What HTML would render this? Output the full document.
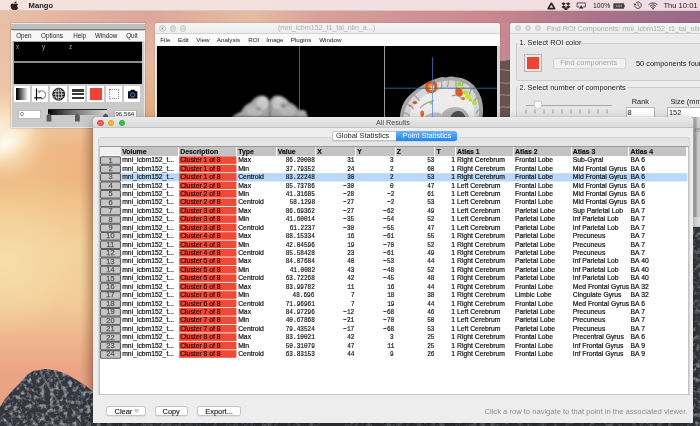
<!DOCTYPE html>
<html><head><meta charset="utf-8">
<style>
*{margin:0;padding:0;box-sizing:border-box}
html,body{width:700px;height:426px;overflow:hidden;background:#e2a982}
body{position:relative;font-family:"Liberation Sans",sans-serif;color:#1a1a1a}
.a{position:absolute}
.t{position:absolute;white-space:pre;line-height:1}
#menubar{left:0;top:0;width:700px;height:11px;background:linear-gradient(90deg,#f4e2dc,#f1dfdf 60%,#efdde4);border-bottom:1px solid #dcc6c6}
.mb{position:absolute;top:1.6px;font-size:7.6px;line-height:8px;color:#222;white-space:pre}
/* mango */
#mango{left:11px;top:23px;width:134px;height:104px;background:#cbcbcb;border:1px solid #a9a9a9}
/* viewer */
#viewer{left:155px;top:23px;width:345px;height:100px;background:#f4f4f4;border-radius:3px 3px 0 0;box-shadow:0 0 2px rgba(0,0,0,.25)}
.tl{position:absolute;width:6.4px;height:6.4px;border-radius:50%;background:#dcdcdc;border:0.5px solid #cdcdcd}
.vm{position:absolute;top:35.9px;font-size:6.25px;line-height:7px;color:#222;white-space:pre}
/* roi */
#roi{left:510px;top:23px;width:200px;height:195px;background:#ececec;border-radius:3px 3px 0 0;box-shadow:0 0 2px rgba(0,0,0,.25)}
/* results */
#res{left:93px;top:117px;width:600.5px;height:306px;background:#ececec;border-radius:4px 4px 0 0;box-shadow:0 3px 10px rgba(0,0,0,.45),0 0 1px rgba(0,0,0,.5)}
.hd{top:147.3px;height:8.4px;background:#c3c3c3}
.hd span{position:absolute;left:1.2px;top:0.6px;font-size:6.9px;line-height:7px;font-weight:bold;color:#111;white-space:pre;-webkit-text-stroke:0.15px #111}
.rh{left:100.1px;width:20.7px;height:8px}
.rh span{position:absolute;left:0;right:0;top:0.3px;text-align:center;font-size:7.4px;line-height:8px;color:#555;-webkit-text-stroke:0.25px #5a5a5a}
.red{left:179.2px;width:57.2px;height:7.8px;background:#ee4a35}
.selbg{left:121px;width:566.3px;height:8.2px;background:#b8d9fb}
.c{position:absolute;height:8px;font-size:6.8px;line-height:8px;margin-top:0px;white-space:pre;padding-left:1.2px;color:#111;overflow:hidden;-webkit-text-stroke:0.2px #111}
.c.d{color:#3c0600;-webkit-text-stroke:0.2px #3c0600}
.c.m{font-family:"Liberation Mono",monospace;font-size:7.9px;text-align:right;padding-right:1.3px;padding-left:0}
.c.m span{display:inline-block;transform:scaleX(0.77);transform-origin:100% 50%}
.c.r{text-align:right;padding-right:0.8px;padding-left:0}
.btn{position:absolute;height:10.5px;top:405.8px;-webkit-text-stroke:0.15px #222;background:#fff;border:0.6px solid #c4c4c4;border-radius:2.5px;box-shadow:0 0.5px 0.5px rgba(0,0,0,.12);font-size:7.4px;line-height:9.4px;text-align:center;color:#222}

</style></head><body>
<div class="a" style="left:0;top:0;width:700px;height:426px;overflow:hidden;will-change:transform">
<!-- desktop -->
<svg class="a" style="left:0;top:0" width="700" height="426">
<defs>
<linearGradient id="top" x1="0" x2="700" y1="0" y2="0" gradientUnits="userSpaceOnUse">
<stop offset="0" stop-color="#eac0a8"/><stop offset="0.15" stop-color="#e0ad9c"/><stop offset="0.21" stop-color="#dca69a"/>
<stop offset="0.36" stop-color="#e5bca2"/><stop offset="0.46" stop-color="#d89f9b"/><stop offset="0.7" stop-color="#c98791"/>
<stop offset="0.86" stop-color="#a9728a"/><stop offset="1" stop-color="#996888"/>
</linearGradient>
<linearGradient id="left" x1="0" x2="0" y1="0" y2="426" gradientUnits="userSpaceOnUse">
<stop offset="0" stop-color="#e8bba3"/><stop offset="0.2" stop-color="#ebc5a9"/><stop offset="0.3" stop-color="#eec39e"/>
<stop offset="0.35" stop-color="#efba88"/><stop offset="0.42" stop-color="#efbd88"/><stop offset="0.47" stop-color="#f2c68e"/>
<stop offset="0.59" stop-color="#f4d29c"/><stop offset="0.7" stop-color="#f2cd98"/><stop offset="0.8" stop-color="#eeb58e"/><stop offset="0.87" stop-color="#eaa586"/><stop offset="1" stop-color="#e9a283"/>
</linearGradient>
<radialGradient id="glow" cx="2" cy="135" r="48" gradientUnits="userSpaceOnUse">
<stop offset="0" stop-color="#fff8e8" stop-opacity="1"/><stop offset="0.5" stop-color="#fbe8c4" stop-opacity="0.7"/><stop offset="1" stop-color="#f8dcb0" stop-opacity="0"/>
</radialGradient>
<radialGradient id="cream" cx="5" cy="265" r="70" gradientUnits="userSpaceOnUse">
<stop offset="0" stop-color="#f7deaa" stop-opacity="0.9"/><stop offset="1" stop-color="#f7deaa" stop-opacity="0"/>
</radialGradient>
<radialGradient id="org" cx="80" cy="175" r="50" gradientUnits="userSpaceOnUse">
<stop offset="0" stop-color="#e8a46e" stop-opacity="0.3"/><stop offset="1" stop-color="#e8a46e" stop-opacity="0"/>
</radialGradient>
<linearGradient id="shadowR" x1="80" x2="93" y1="0" y2="0" gradientUnits="userSpaceOnUse">
<stop offset="0" stop-color="#a0502a" stop-opacity="0"/><stop offset="1" stop-color="#a0502a" stop-opacity="0.25"/>
</linearGradient>
<linearGradient id="rock" x1="0" x2="0" y1="360" y2="426" gradientUnits="userSpaceOnUse">
<stop offset="0" stop-color="#3c3d46"/><stop offset="1" stop-color="#494a52"/>
</linearGradient>
<linearGradient id="rockR" x1="0" x2="0" y1="55" y2="120" gradientUnits="userSpaceOnUse">
<stop offset="0" stop-color="#9a7f78"/><stop offset="1" stop-color="#7d6a68"/>
</linearGradient>
<filter id="blr"><feGaussianBlur stdDeviation="0.5"/></filter>
</defs>
<rect x="0" y="0" width="700" height="426" fill="url(#left)"/>
<rect x="0" y="140" width="120" height="220" fill="url(#cream)"/>
<rect x="0" y="110" width="120" height="120" fill="url(#org)"/>
<rect x="0" y="85" width="70" height="110" fill="url(#glow)"/>
<radialGradient id="glow2" cx="0.5" cy="0.5" r="0.5"><stop offset="0" stop-color="#fffdf6" stop-opacity="1"/><stop offset="0.4" stop-color="#fdf0da" stop-opacity="0.85"/><stop offset="1" stop-color="#f6d8b0" stop-opacity="0"/></radialGradient>
<ellipse cx="6" cy="143" rx="36" ry="20" transform="rotate(-32 6 143)" fill="url(#glow2)"/>
<ellipse cx="34" cy="122" rx="22" ry="7" transform="rotate(-25 34 122)" fill="url(#glow2)" opacity="0.6"/>
<rect x="80" y="117" width="13" height="309" fill="url(#shadowR)"/>
<rect x="0" y="0" width="700" height="24" fill="url(#top)"/>
<linearGradient id="gap1" x1="0" x2="0" y1="20" y2="120" gradientUnits="userSpaceOnUse"><stop offset="0" stop-color="#e0ad9e"/><stop offset="0.45" stop-color="#e6b89c"/><stop offset="1" stop-color="#e3aa7a"/></linearGradient><rect x="145" y="23" width="10" height="100" fill="url(#gap1)"/>
<rect x="490" y="23" width="25" height="100" fill="#c88890"/>
<path d="M495,61.5 L505,60.8 L512,59.5 L520,59 L520,125 L495,125 Z" fill="#66524f"/>
<g stroke="#a88d84" stroke-width="1.2" fill="none" opacity="0.8"><path d="M499,70 C503,68 507,72 511,70"/><path d="M498,84 C502,80 505,86 511,82"/><path d="M499,96 C503,92 507,98 511,94"/><path d="M500,108 C504,104 507,110 511,106"/></g>
<filter id="tex" x="0" y="0" width="100%" height="100%"><feTurbulence type="fractalNoise" baseFrequency="0.22" numOctaves="3" seed="4"/><feColorMatrix type="matrix" values="0 0 0 0 0.55  0 0 0 0 0.56  0 0 0 0 0.6  3.2 0 0 0 -1.45"/><feGaussianBlur stdDeviation="0.35"/></filter>
<clipPath id="rockclip"><path d="M0,407 L5,399 L12,391 L20,383 L27,375 L33,371 L45,369 L57,370.5 L66,374 L76,379.5 L86,386 L95,393 L95,426 L0,426 Z"/><rect x="80" y="419" width="620" height="7"/><rect x="686" y="215" width="14" height="211"/></clipPath>
<g clip-path="url(#rockclip)">
<rect x="0" y="360" width="700" height="66" fill="#34363f"/>
<rect x="680" y="210" width="20" height="216" fill="#34363f"/>
<rect x="0" y="360" width="100" height="66" fill="#9a9ca4" filter="url(#tex)" opacity="0.7"/><rect x="100" y="360" width="600" height="66" fill="#9a9ca4" filter="url(#tex)" opacity="0.35"/>
<rect x="680" y="210" width="20" height="216" fill="#9a9ca4" filter="url(#tex)" opacity="0.45"/>
<path d="M40,372 L46,382 L52,392 L58,402 L62,412" stroke="#8e9096" stroke-width="2" fill="none" opacity="0.5"/>
<path d="M56,374 L62,386 L66,398" stroke="#8e9096" stroke-width="1.5" fill="none" opacity="0.5"/>
</g>
</svg>
<!-- menubar -->
<div id="menubar" class="a">
<svg class="a" style="left:10.4px;top:0.7px" width="8.6" height="9.2" viewBox="1.6 0.6 11.6 13.6" preserveAspectRatio="none"><path d="M11.2 8.5c0-1.8 1.5-2.6 1.5-2.7-.8-1.2-2.1-1.4-2.5-1.4-1.1-.1-2.1.6-2.6.6-.6 0-1.4-.6-2.3-.6C4 4.4 2.3 5.5 2.3 8c0 2.6 1.9 5.9 3.3 5.9.7 0 1.1-.5 2.1-.5s1.3.5 2.2.5c1.3 0 2.7-2.9 2.9-3.4-1.4-.5-1.6-1.7-1.6-2zM9.6 3.3c.6-.7 1-1.6.9-2.5-.8 0-1.8.6-2.3 1.2-.5.6-1 1.5-.8 2.4.8.1 1.7-.4 2.2-1.1z" fill="#2a2426"/></svg>
<div class="mb" style="left:28.6px;font-weight:bold">Mango</div>
<svg class="a" style="left:547.2px;top:1.8px" width="8.8" height="7.8" viewBox="0 0 14 12.4"><path d="M7 2L12.2 10.6H1.8Z" fill="none" stroke="#2a2426" stroke-width="2.6" stroke-linejoin="round"/></svg>
<svg class="a" style="left:560.8px;top:1.6px" width="9.8" height="8.4" viewBox="0 0 16 14.6"><path d="M4 0.4L0 3.1 4 5.8 0 8.5l4 2.7 4-2.7-4-2.7 4-2.7zM12 0.4L8 3.1l4 2.7-4 2.7 4 2.7 4-2.7-4-2.7 4-2.7zM4 12L8 14.6 12 12 8 9.3z" fill="#2a2426"/></svg>
<svg class="a" style="left:576.3px;top:2.2px" width="10.4" height="7" viewBox="0 0 20 14"><path d="M6 10H1.8V1.8h16.4V10H14" fill="none" stroke="#2a2426" stroke-width="1.5"/><path d="M10 6.5l4.6 6.5H5.4z" fill="#2a2426"/></svg>
<div class="mb" style="left:593px;font-size:6.8px;top:2.1px">100%</div>
<svg class="a" style="left:612.8px;top:2.6px" width="12.6" height="6" viewBox="0 0 25 12"><rect x="0.5" y="0.5" width="21.5" height="11" rx="1" fill="#4a4446"/><rect x="22.5" y="3.5" width="2.2" height="5" fill="#4a4446"/><path d="M6 6h3M7.5 4.5v3M14 6h3M17 4.5v3" stroke="#cfc4c6" stroke-width="1.1"/><path d="M10 8.5 L12 3.5 L13.5 8.5" fill="none" stroke="#cfc4c6" stroke-width="1"/></svg>
<svg class="a" style="left:632.5px;top:1.3px" width="9" height="8.5" viewBox="0 0 18 17"><path d="M3.5 8.5A6.5 6.5 0 1 0 6 3.3" fill="none" stroke="#2a2426" stroke-width="1.6"/><path d="M1 5.5l3 3.6 3-3.4z" fill="#2a2426"/><path d="M10 4.5v4.5l3 2" fill="none" stroke="#2a2426" stroke-width="1.5"/></svg>
<svg class="a" style="left:647.8px;top:1.6px" width="10" height="8" viewBox="0 0 20 16"><path d="M1 5.5a13 13 0 0 1 18 0M3.8 8.3a9 9 0 0 1 12.4 0M6.6 11.1a5 5 0 0 1 6.8 0" fill="none" stroke="#2a2426" stroke-width="1.7"/><path d="M10 15.5l-2-2.3a2.8 2.8 0 0 1 4 0z" fill="#2a2426"/></svg>
<div class="mb" style="left:663.4px">Thu 10:01</div>
</div>

<!-- mango window -->
<div class="a" style="left:10.6px;top:22.9px;width:134.6px;height:105.5px;background:#cacaca;border:0.6px solid #e6e6e6;box-shadow:0 0 1.5px rgba(0,0,0,.35)"></div>
<div class="a" style="left:11.2px;top:23.5px;width:133.4px;height:6.9px;background:#bdbdbd;border-bottom:0.8px solid #777"></div>
<div class="a" style="left:11.2px;top:30.6px;width:133.4px;height:10.4px;background:#f6f6f6"></div>
<div class="t" style="left:16.2px;top:31.6px;font-size:6.3px;line-height:7.5px;color:#222">Open</div>
<div class="t" style="left:41.1px;top:31.6px;font-size:6.3px;line-height:7.5px;color:#222">Options</div>
<div class="t" style="left:73.2px;top:31.6px;font-size:6.3px;line-height:7.5px;color:#222">Help</div>
<div class="t" style="left:95px;top:31.6px;font-size:6.3px;line-height:7.5px;color:#222">Window</div>
<div class="t" style="left:126.2px;top:31.6px;font-size:6.3px;line-height:7.5px;color:#222">Quit</div>
<div class="a" style="left:13.3px;top:41.1px;width:128.9px;height:43px;background:#8c8c8c;border:0.6px solid #a8a8a8"></div>
<div class="a" style="left:13.9px;top:41.7px;width:127.7px;height:19.5px;background:#000"></div>
<div class="a" style="left:13.9px;top:63px;width:127.7px;height:20.7px;background:#000"></div>
<div class="t" style="left:16px;top:44.2px;font-size:6.4px;color:#a4a4a4">x</div>
<div class="t" style="left:42.1px;top:44.2px;font-size:6.4px;color:#a4a4a4">y</div>
<div class="t" style="left:68.9px;top:44.2px;font-size:6.4px;color:#a4a4a4">z</div>
<div class="a" style="left:13.9px;top:85.6px;width:16px;height:16.4px;background:#fff"></div>
<div class="a" style="left:16px;top:87.8px;width:11.6px;height:12.1px;background:linear-gradient(90deg,#000,#1a1a1a 15%,#fff)"></div>
<div class="a" style="left:31.8px;top:85.6px;width:16.5px;height:16.4px;background:#fff"></div>
<svg class="a" style="left:31.8px;top:85.6px" width="16.5" height="16.4" viewBox="0 0 16.5 16.4"><path d="M7.4 5.6A3.9 3.9 0 1 1 9.2 12.6" stroke="#8e8e8e" stroke-width="1.1" fill="none"/><path d="M5.6 4.2l1.4 3.4 2.2-2.6z" fill="#8e8e8e"/><path d="M4.5 2.4V14.4M2.2 11.9H9.8" stroke="#111" stroke-width="1.2" fill="none"/></svg>
<div class="a" style="left:50.2px;top:85.6px;width:17px;height:16.4px;background:#fff"></div>
<svg class="a" style="left:50.2px;top:85.6px" width="17" height="16.4" viewBox="0 0 17 16.4"><circle cx="8.7" cy="8.2" r="6" fill="#1e1e1e"/><g stroke="#f4f4f4" stroke-width="0.75" fill="none"><path d="M2.9 5.6Q8.7 4.4 14.5 5.6M2.7 8.2H14.7M2.9 10.8Q8.7 12 14.5 10.8"/><path d="M8.7 2.2V14.2"/><ellipse cx="8.7" cy="8.2" rx="3" ry="6"/></g><circle cx="8.7" cy="8.2" r="6" fill="none" stroke="#1e1e1e" stroke-width="0.9"/></svg>
<div class="a" style="left:68.6px;top:85.6px;width:16.6px;height:16.4px;background:#fff"></div>
<div class="a" style="left:72px;top:89.2px;width:11.5px;height:2.4px;background:#3a3a3a"></div>
<div class="a" style="left:72px;top:92.9px;width:11.5px;height:2.4px;background:#3a3a3a"></div>
<div class="a" style="left:72px;top:96.6px;width:11.5px;height:2.4px;background:#3a3a3a"></div>
<div class="a" style="left:87.2px;top:85.6px;width:16.6px;height:16.4px;background:#fff"></div>
<div class="a" style="left:89.8px;top:88px;width:12.2px;height:12.2px;background:#ee4430"></div>
<div class="a" style="left:105.5px;top:85.6px;width:16.5px;height:16.4px;background:#fff"></div>
<div class="a" style="left:109.4px;top:89.4px;width:9.6px;height:9.4px;border:0.8px dotted #8a8a8a"></div>
<div class="a" style="left:123.8px;top:85.6px;width:16.7px;height:16.4px;background:#fff"></div>
<svg class="a" style="left:123.8px;top:85.6px" width="16.7" height="16.4" viewBox="0 0 16.7 16.4"><path d="M4 5.2h2l1-1.4h3.6l1 1.4h1.8v7.4H4z" fill="#111"/><circle cx="8.7" cy="8.9" r="2.1" fill="none" stroke="#3a8ee6" stroke-width="0.9"/></svg>
<div class="a" style="left:18px;top:109.6px;width:23px;height:9.8px;background:#fff;border:0.5px solid #bdbdbd"></div>
<div class="t" style="left:20.3px;top:111.4px;font-size:6.2px;color:#333">0</div>
<div class="a" style="left:48.4px;top:109px;width:58.6px;height:6px;background:linear-gradient(90deg,#000,#555 30%,#ddd);border-top:0.6px solid #222"></div>
<svg class="a" style="left:46px;top:112.5px" width="64" height="9" viewBox="0 0 64 9"><path d="M0.6 2.5L3 0.3 5.4 2.5V8.6H0.6z" fill="#5b5b5b"/><path d="M29 2.5L31.4 0.3 33.8 2.5V8.6H29z" fill="#5b5b5b"/><path d="M57.2 2.5L59.6 0.3 62 2.5V8.6H57.2z" fill="#5b5b5b"/></svg>
<div class="a" style="left:114px;top:109.6px;width:23px;height:9.8px;background:#fff;border:0.5px solid #bdbdbd"></div>
<div class="t" style="left:115.4px;top:111.4px;font-size:6.2px;color:#333">96.564</div>

<!-- viewer window -->
<div class="a" style="left:155px;top:23px;width:345px;height:100px;background:#f6f6f6;border-radius:3px 3px 0 0;box-shadow:0 0 1.5px rgba(0,0,0,.3)"></div>
<div class="a" style="left:155px;top:23px;width:345px;height:10.5px;background:linear-gradient(#f6f6f6,#ececec);border-radius:3px 3px 0 0;border-bottom:0.6px solid #d2d2d2"></div>
<div class="tl" style="left:159.2px;top:25.2px"></div>
<div class="a" style="left:161.7px;top:27.7px;width:1.5px;height:1.5px;border-radius:50%;background:#666"></div>
<div class="tl" style="left:169.7px;top:25.2px"></div>
<div class="tl" style="left:180.1px;top:25.2px"></div>
<div class="t" style="left:278px;top:24.6px;font-size:7.1px;color:#ababab">(mni_icbm152_t1_tal_nlin_a...)</div>
<div class="a" style="left:155px;top:33.6px;width:345px;height:12.6px;background:#fbfbfb"></div>
<div class="vm" style="left:160.3px">File</div>
<div class="vm" style="left:178px">Edit</div>
<div class="vm" style="left:196.2px">View</div>
<div class="vm" style="left:216.8px">Analysis</div>
<div class="vm" style="left:248.2px">ROI</div>
<div class="vm" style="left:266.2px">Image</div>
<div class="vm" style="left:290.8px">Plugins</div>
<div class="vm" style="left:319.2px">Window</div>
<div class="a" style="left:155.8px;top:46.2px;width:343.2px;height:80px;background:#e0e0e0"></div>
<div class="a" style="left:156.6px;top:46.4px;width:340.8px;height:80px;background:#000"></div>
<div class="a" style="left:383.7px;top:46.4px;width:1px;height:80px;background:#9a9a9a"></div>
<div class="a" style="left:298.8px;top:46.4px;width:0.8px;height:80px;background:#2f63a0"></div>
<svg class="a" style="left:156.6px;top:46.4px" width="341" height="72" viewBox="156.6 46.4 341 72">
<defs>
<filter id="bl1" x="-20%" y="-20%" width="140%" height="140%"><feGaussianBlur stdDeviation="0.7"/></filter>
<filter id="bl2" x="-20%" y="-20%" width="140%" height="140%"><feGaussianBlur stdDeviation="1.1"/></filter>
<filter id="bl05" x="-20%" y="-20%" width="140%" height="140%"><feGaussianBlur stdDeviation="0.45"/></filter>
</defs>
<g filter="url(#bl2)">
<path d="M231,118 C234,115 238,113.5 241,112 C243,107 247,104 250.5,103 C253,99 257,96 262,96 C266,96 268.5,99 269.3,103 C270,99 273,96 277,96 C282,96 286,99 289,103 C293,104 297,108 299,111 C303,110.5 306,113 308,118 Z" fill="#a8a8a8"/>
<ellipse cx="262" cy="104" rx="6" ry="6" fill="#c8c8c8"/>
<ellipse cx="279" cy="104" rx="7" ry="6" fill="#c4c4c4"/>
<ellipse cx="254" cy="112" rx="8" ry="5" fill="#bcbcbc"/>
<ellipse cx="287" cy="112" rx="8" ry="5" fill="#b8b8b8"/>
<ellipse cx="262" cy="99.5" rx="3" ry="2" fill="#d4d4d4"/>
<ellipse cx="278" cy="99.5" rx="3" ry="2" fill="#d0d0d0"/>
<ellipse cx="283" cy="106" rx="3" ry="2.5" fill="#8e8e8e"/>
<ellipse cx="258" cy="109" rx="3" ry="2" fill="#9a9a9a"/>
<ellipse cx="302" cy="114" rx="4" ry="3.5" fill="#b0b0b0"/>
<path d="M269.4,103 L269.4,118" stroke="#4a4a4a" stroke-width="1.1"/>
</g>
<g filter="url(#bl05)">
<path d="M399.5,118 C400,108 404,100 410,95 C415,90 421,86 427,83 C431,81 435,79 438,78.5 C441,77 444,77.5 446,78 C449,76.5 453,76.8 456,78 C459,77.5 462,78.5 465,80 C472,83 478,90 481,99 C483,106 483,112 482,118 Z" fill="#a6a6a6"/>
<path d="M403,118 C404,109 408,101 414,96 C419,91 425,88 430,85.5 C436,83 441,81.5 447,81 C454,80.5 461,82 466,84.5 C472,88.5 476,96 478,104 C479,110 479,114 478,118 Z" fill="#d6d6d6"/>
<path d="M409,118 C410,110 414,104 420,99 C426,94 434,90.5 442,89 C451,88 459,89.5 465,93 C471,98 474,106 474,118 Z" fill="#ececec"/>
<g stroke="#a4a4a4" stroke-width="1.3" fill="none" stroke-linecap="round">
<path d="M441,79 C441.5,82 442,85 441,88"/><path d="M447.5,78 C448,81 448.5,84 447,87"/><path d="M456,78.5 C455.5,82 455,85 456,88"/><path d="M464,81 C462,84 461,87 461.5,90"/>
<path d="M423,86.5 C425,89 427,91 428,94"/><path d="M413,95 C416,97 418,99 419,101"/><path d="M405,104 C409,105 412,107 413,109"/><path d="M401.5,113 C405,113 408,114 409,116"/>
<path d="M473,86 C470,90 469,93 469,96"/><path d="M479,96 C476,98 474,100 473,103"/><path d="M481.5,108 C479,109 477,111 476,113"/>
<path d="M420,108 C424,104 429,102 433,101"/><path d="M452,96 C456,95 460,97 462,100"/>
</g>
<path d="M440,118 C442,111 448,107.5 455,107.5 C462,107.5 467,111 469,118 Z" fill="#b4b4b4"/>
<path d="M450,118 C451,114 454,111.5 458,111.5 C461,111.5 464,114 465,118 Z" fill="#505050"/>
<path d="M424,118 C426,114.5 431,113 436,113 C440,113 442,115 443,118 Z" fill="#c0c0c0"/>
</g>
<g filter="url(#bl05)">
<path d="M425.5,84.5 C426.5,82 429,81.5 430.5,82 C431.5,80.8 434,80.8 435,82.5 C436.5,83.5 437,85.5 436.8,88 C437,90 436,92.3 434,92.7 C432.8,94 429.5,94 428.3,92.7 C426.3,92.3 424.8,90.8 425.2,88.7 C424.5,87.5 424.8,85.5 425.5,84.5 Z" fill="#e4501a"/>
<path d="M428,86 C428.8,84 431.5,83.6 433.2,84.8 C434.8,86 434.8,88.8 433.6,90.4 C432,91.6 429.2,91.2 428.4,89.6 C427.6,88.4 427.6,87.2 428,86 Z" fill="#f39a1c"/>
<circle cx="432" cy="88.2" r="1.9" fill="#fffbe8"/>
<circle cx="437" cy="90" r="1.2" fill="#b8e01c"/>
<circle cx="459" cy="84.5" r="2.2" fill="#9ad81c"/>
<circle cx="462" cy="88" r="2" fill="#c8e62a"/>
<path d="M455,90 C456,88 459,88 461,90 C463,92 463,95 461,96.5 C459,97.5 456,96 455,94 Z" fill="#e4561a"/>
<circle cx="465" cy="93" r="2.2" fill="#b6e01c"/>
<circle cx="467.5" cy="97" r="2.8" fill="#c6e82a"/>
<circle cx="463" cy="99" r="1.6" fill="#e8701c"/>
<circle cx="470" cy="100.5" r="1.5" fill="#a4d81c"/>
<circle cx="474.2" cy="103.4" r="2.3" fill="#b4e01c"/>
<ellipse cx="414.5" cy="103" rx="2.2" ry="1.6" fill="#e2581c"/>
<ellipse cx="421.8" cy="114.2" rx="1.8" ry="3.2" fill="#e8641c"/>
<ellipse cx="430.5" cy="103.3" rx="1.1" ry="1.6" fill="#9cd41c"/>
<ellipse cx="409.5" cy="106.3" rx="1" ry="0.8" fill="#e25a1c"/>
</g>
<path d="M384.5,88.6H497" stroke="#2e64a4" stroke-width="0.9"/>
<path d="M432.1,57.5V80" stroke="#2e64a4" stroke-width="0.9"/>
<path d="M432.1,80V118" stroke="#5d9ad6" stroke-width="0.9" opacity="0.9"/>
</svg>
<div class="a" style="left:497.4px;top:46.4px;width:2.6px;height:80px;background:#d6d6d6"></div>

<!-- roi window -->
<div class="a" style="left:510.3px;top:23px;width:200px;height:195px;background:#ececec;border-radius:3px 3px 0 0;box-shadow:0 0 1.5px rgba(0,0,0,.3)"></div>
<div class="a" style="left:510.3px;top:23px;width:200px;height:10.5px;background:linear-gradient(#f6f6f6,#ececec);border-radius:3px 3px 0 0;border-bottom:0.6px solid #d2d2d2"></div>
<div class="tl" style="left:514.5px;top:25.1px"></div>
<div class="tl" style="left:524.5px;top:25.1px"></div>
<div class="tl" style="left:534.5px;top:25.1px"></div>
<div class="t" style="left:546.8px;top:24.5px;font-size:7.2px;color:#ababab">Find ROI Components: mni_icbm152_t1_tal_nlin_a</div>
<div class="a" style="left:515.6px;top:42.6px;width:200px;height:38.6px;border:0.6px solid #cdcdcd;border-radius:2px;background:#e6e6e6"></div>
<div class="a" style="left:518px;top:39px;width:63px;height:8px;background:#ececec"></div>
<div class="t" style="left:519.4px;top:39.4px;font-size:7.4px;color:#222">1. Select ROI color</div>
<div class="a" style="left:524px;top:54.3px;width:18px;height:17.3px;background:#e8e8e8;border:0.6px solid #b5b5b5"></div>
<div class="a" style="left:527px;top:57.2px;width:12px;height:11.8px;background:#ee4430"></div>
<div class="a" style="left:552.6px;top:57.5px;width:73.2px;height:11px;background:#f1f1f1;border:0.6px solid #d6d6d6;border-radius:2.5px"></div>
<div class="t" style="left:560.2px;top:59.2px;font-size:7.4px;color:#a4a4a4">Find components</div>
<div class="t" style="left:636px;top:59.6px;font-size:7.4px;color:#222">50 components found</div>
<div class="a" style="left:515.6px;top:87px;width:200px;height:140px;border:0.6px solid #cdcdcd;border-radius:2px;background:#e6e6e6"></div>
<div class="a" style="left:518px;top:83px;width:110px;height:8px;background:#ececec"></div>
<div class="t" style="left:519.4px;top:83.6px;font-size:7.4px;color:#222">2. Select number of components</div>
<div class="a" style="left:526px;top:105px;width:86px;height:1px;background:#a9a9a9"></div>
<svg class="a" style="left:524px;top:100px" width="90" height="15" viewBox="0 0 90 15">
<g stroke="#8c8c8c" stroke-width="0.8"><path d="M2 9.4V13.6M11 9.4V13.6M20 9.4V13.6M29 9.4V13.6M38 9.4V13.6M47 9.4V13.6M56 9.4V13.6M65 9.4V13.6M74 9.4V13.6M83 9.4V13.6"/></g>
<path d="M10.2 1.2H17.4V6.4L13.8 9.6 10.2 6.4Z" fill="#fafafa" stroke="#b0b0b0" stroke-width="0.6"/>
</svg>
<div class="t" style="left:631.7px;top:98px;font-size:7.4px;color:#222">Rank</div>
<div class="t" style="left:670.4px;top:98px;font-size:7.4px;color:#222">Size (mm)</div>
<div class="a" style="left:625.8px;top:107px;width:29.6px;height:12px;background:#fff;border:0.6px solid #b8b8b8"></div>
<div class="t" style="left:627.5px;top:109.4px;font-size:7.4px;color:#222">8</div>
<div class="a" style="left:667px;top:107px;width:40px;height:12px;background:#fff;border:0.6px solid #b8b8b8"></div>
<div class="t" style="left:669px;top:109.4px;font-size:7.4px;color:#222">152</div>

<div class="a" style="left:690px;top:117px;width:10px;height:100px;background:linear-gradient(90deg,#c9c9c9 0,#c9c9c9 35%,#a9a9a9 45%,#b0b0b0 62%,#d2d2d2 70%,#d6d6d6 100%)"></div>
<div class="t" style="left:694.5px;top:125.5px;font-size:7px;font-style:italic;color:#8c8c8c">re</div>
<!-- results window -->
<div class="a" style="left:93.3px;top:117.3px;width:600.2px;height:305.5px;background:#ededed;border-radius:4px 4px 0 0;box-shadow:0 4px 12px rgba(0,0,0,.35),0 0 1px rgba(0,0,0,.45)"></div>
<div class="a" style="left:93.3px;top:117.3px;width:600.2px;height:10.4px;background:linear-gradient(#ebebeb,#d8d8d8);border-radius:4px 4px 0 0;border-bottom:0.6px solid #c2c2c2"></div>
<div class="a" style="left:97.4px;top:119.5px;width:6.6px;height:6.6px;border-radius:50%;background:#fc5f57;border:0.5px solid #e2463f"></div>
<div class="a" style="left:107.9px;top:119.5px;width:6.6px;height:6.6px;border-radius:50%;background:#fdbc2e;border:0.5px solid #e1a116"></div>
<div class="a" style="left:118.5px;top:119.5px;width:6.6px;height:6.6px;border-radius:50%;background:#33c748;border:0.5px solid #27aa35"></div>
<div class="t" style="left:376px;top:119px;font-size:7.2px;color:#4a4a4a">All Results</div>
<div class="a" style="left:98px;top:137.2px;width:592px;height:258px;background:#e4e4e4;border:0.6px solid #d6d6d6;border-bottom:none;border-radius:2px 2px 0 0"></div>
<div class="a" style="left:331.8px;top:130.9px;width:124.7px;height:10.5px;background:#fff;border:0.6px solid #c4c4c4;border-radius:2.5px;box-shadow:0 0.5px 0.6px rgba(0,0,0,.15)"></div>
<div class="a" style="left:396px;top:130.9px;width:60.5px;height:10.5px;background:linear-gradient(#6cb3fa,#1e85f5);border-radius:0 2.5px 2.5px 0"></div>
<div class="t" style="left:336px;top:132.4px;font-size:7.45px;color:#222">Global Statistics</div>
<div class="t" style="left:402.5px;top:132.4px;font-size:7.45px;color:#fff">Point Statistics</div>
<div class="a" style="left:99.2px;top:146.1px;width:589.6px;height:248.9px;background:#fff;border:0.7px solid #c4c4c4;border-top-color:#9a9a9a"></div>
<div class="a" style="left:100px;top:147.1px;width:20.7px;height:8.4px;background:#f1f1f1"></div>
<div class="btn" style="left:106.4px;width:39.2px;text-align:left;padding-left:7.2px">Clear</div><svg class="a" style="left:134.4px;top:409.4px" width="5" height="4" viewBox="0 0 5 4"><path d="M0.6 0.8H4.4L2.5 3.4Z" fill="none" stroke="#8a8a8a" stroke-width="0.7"/></svg>
<div class="btn" style="left:154.6px;width:33.2px">Copy</div>
<div class="btn" style="left:196.8px;width:44.5px">Export...</div>
<div class="t" style="left:484.5px;top:408px;font-size:7.6px;color:#8e8e8e">Click a row to navigate to that point in the associated viewer.</div>
<svg class="a" style="left:0;top:0" width="700" height="426"><rect x="100.5" y="156.70" width="20" height="7.6" rx="1" fill="#c6c6c6" stroke="#5f5f5f" stroke-width="1.1"/><rect x="179.2" y="156.30" width="57.2" height="7.6" fill="#ee4a35"/><rect x="100.5" y="165.13" width="20" height="7.6" rx="1" fill="#c6c6c6" stroke="#5f5f5f" stroke-width="1.1"/><rect x="179.2" y="164.73" width="57.2" height="7.6" fill="#ee4a35"/><rect x="100.5" y="173.56" width="20" height="7.6" rx="1" fill="#c6c6c6" stroke="#5f5f5f" stroke-width="1.1"/><rect x="121" y="173.16" width="566.3" height="8.3" fill="#b8d9fb"/><rect x="179.2" y="173.16" width="57.2" height="7.6" fill="#ee4a35"/><rect x="100.5" y="181.99" width="20" height="7.6" rx="1" fill="#c6c6c6" stroke="#5f5f5f" stroke-width="1.1"/><rect x="179.2" y="181.59" width="57.2" height="7.6" fill="#ee4a35"/><rect x="100.5" y="190.42" width="20" height="7.6" rx="1" fill="#c6c6c6" stroke="#5f5f5f" stroke-width="1.1"/><rect x="179.2" y="190.02" width="57.2" height="7.6" fill="#ee4a35"/><rect x="100.5" y="198.85" width="20" height="7.6" rx="1" fill="#c6c6c6" stroke="#5f5f5f" stroke-width="1.1"/><rect x="179.2" y="198.45" width="57.2" height="7.6" fill="#ee4a35"/><rect x="100.5" y="207.28" width="20" height="7.6" rx="1" fill="#c6c6c6" stroke="#5f5f5f" stroke-width="1.1"/><rect x="179.2" y="206.88" width="57.2" height="7.6" fill="#ee4a35"/><rect x="100.5" y="215.71" width="20" height="7.6" rx="1" fill="#c6c6c6" stroke="#5f5f5f" stroke-width="1.1"/><rect x="179.2" y="215.31" width="57.2" height="7.6" fill="#ee4a35"/><rect x="100.5" y="224.14" width="20" height="7.6" rx="1" fill="#c6c6c6" stroke="#5f5f5f" stroke-width="1.1"/><rect x="179.2" y="223.74" width="57.2" height="7.6" fill="#ee4a35"/><rect x="100.5" y="232.57" width="20" height="7.6" rx="1" fill="#c6c6c6" stroke="#5f5f5f" stroke-width="1.1"/><rect x="179.2" y="232.17" width="57.2" height="7.6" fill="#ee4a35"/><rect x="100.5" y="241.00" width="20" height="7.6" rx="1" fill="#c6c6c6" stroke="#5f5f5f" stroke-width="1.1"/><rect x="179.2" y="240.60" width="57.2" height="7.6" fill="#ee4a35"/><rect x="100.5" y="249.43" width="20" height="7.6" rx="1" fill="#c6c6c6" stroke="#5f5f5f" stroke-width="1.1"/><rect x="179.2" y="249.03" width="57.2" height="7.6" fill="#ee4a35"/><rect x="100.5" y="257.86" width="20" height="7.6" rx="1" fill="#c6c6c6" stroke="#5f5f5f" stroke-width="1.1"/><rect x="179.2" y="257.46" width="57.2" height="7.6" fill="#ee4a35"/><rect x="100.5" y="266.29" width="20" height="7.6" rx="1" fill="#c6c6c6" stroke="#5f5f5f" stroke-width="1.1"/><rect x="179.2" y="265.89" width="57.2" height="7.6" fill="#ee4a35"/><rect x="100.5" y="274.72" width="20" height="7.6" rx="1" fill="#c6c6c6" stroke="#5f5f5f" stroke-width="1.1"/><rect x="179.2" y="274.32" width="57.2" height="7.6" fill="#ee4a35"/><rect x="100.5" y="283.15" width="20" height="7.6" rx="1" fill="#c6c6c6" stroke="#5f5f5f" stroke-width="1.1"/><rect x="179.2" y="282.75" width="57.2" height="7.6" fill="#ee4a35"/><rect x="100.5" y="291.58" width="20" height="7.6" rx="1" fill="#c6c6c6" stroke="#5f5f5f" stroke-width="1.1"/><rect x="179.2" y="291.18" width="57.2" height="7.6" fill="#ee4a35"/><rect x="100.5" y="300.01" width="20" height="7.6" rx="1" fill="#c6c6c6" stroke="#5f5f5f" stroke-width="1.1"/><rect x="179.2" y="299.61" width="57.2" height="7.6" fill="#ee4a35"/><rect x="100.5" y="308.44" width="20" height="7.6" rx="1" fill="#c6c6c6" stroke="#5f5f5f" stroke-width="1.1"/><rect x="179.2" y="308.04" width="57.2" height="7.6" fill="#ee4a35"/><rect x="100.5" y="316.87" width="20" height="7.6" rx="1" fill="#c6c6c6" stroke="#5f5f5f" stroke-width="1.1"/><rect x="179.2" y="316.47" width="57.2" height="7.6" fill="#ee4a35"/><rect x="100.5" y="325.30" width="20" height="7.6" rx="1" fill="#c6c6c6" stroke="#5f5f5f" stroke-width="1.1"/><rect x="179.2" y="324.90" width="57.2" height="7.6" fill="#ee4a35"/><rect x="100.5" y="333.73" width="20" height="7.6" rx="1" fill="#c6c6c6" stroke="#5f5f5f" stroke-width="1.1"/><rect x="179.2" y="333.33" width="57.2" height="7.6" fill="#ee4a35"/><rect x="100.5" y="342.16" width="20" height="7.6" rx="1" fill="#c6c6c6" stroke="#5f5f5f" stroke-width="1.1"/><rect x="179.2" y="341.76" width="57.2" height="7.6" fill="#ee4a35"/><rect x="100.5" y="350.59" width="20" height="7.6" rx="1" fill="#c6c6c6" stroke="#5f5f5f" stroke-width="1.1"/><rect x="179.2" y="350.19" width="57.2" height="7.6" fill="#ee4a35"/></svg><div class="a" style="left:0;top:0;width:700px;height:426px;will-change:transform"><div class="a hd" style="left:121px;width:57.00px"><span>Volume</span></div>
<div class="a hd" style="left:179px;width:57.00px"><span>Description</span></div>
<div class="a hd" style="left:237px;width:38.50px"><span>Type</span></div>
<div class="a hd" style="left:276.5px;width:38.50px"><span>Value</span></div>
<div class="a hd" style="left:316px;width:39.00px"><span>X</span></div>
<div class="a hd" style="left:356px;width:38.50px"><span>Y</span></div>
<div class="a hd" style="left:395.5px;width:38.80px"><span>Z</span></div>
<div class="a hd" style="left:435.3px;width:19.50px"><span>T</span></div>
<div class="a hd" style="left:455.8px;width:57.00px"><span>Atlas 1</span></div>
<div class="a hd" style="left:513.8px;width:56.80px"><span>Atlas 2</span></div>
<div class="a hd" style="left:571.6px;width:56.80px"><span>Atlas 3</span></div>
<div class="a hd" style="left:629.4px;width:56.90px"><span>Atlas 4</span></div>
<div class="a rh" style="top:156.30px"><span>1</span></div>
<div class="c" style="left:121px;top:156.30px;width:58.00px">mni_icbm152_t...</div>
<div class="c d" style="left:179px;top:156.30px;width:58.00px">Cluster 1 of 8</div>
<div class="c" style="left:237px;top:156.30px;width:39.50px">Max</div>
<div class="c m" style="left:276.5px;top:156.30px;width:39.50px"><span>86.20008</span></div>
<div class="c m" style="left:316px;top:156.30px;width:40.00px"><span>31</span></div>
<div class="c m" style="left:356px;top:156.30px;width:39.50px"><span>3</span></div>
<div class="c m" style="left:395.5px;top:156.30px;width:39.80px"><span>53</span></div>
<div class="c r" style="left:435.3px;top:156.30px;width:20.50px">1</div>
<div class="c" style="left:455.8px;top:156.30px;width:58.00px">Right Cerebrum</div>
<div class="c" style="left:513.8px;top:156.30px;width:57.80px">Frontal Lobe</div>
<div class="c" style="left:571.6px;top:156.30px;width:57.80px">Sub-Gyral</div>
<div class="c" style="left:629.4px;top:156.30px;width:57.90px">BA 6</div>
<div class="a rh" style="top:164.73px"><span>2</span></div>
<div class="c" style="left:121px;top:164.73px;width:58.00px">mni_icbm152_t...</div>
<div class="c d" style="left:179px;top:164.73px;width:58.00px">Cluster 1 of 8</div>
<div class="c" style="left:237px;top:164.73px;width:39.50px">Min</div>
<div class="c m" style="left:276.5px;top:164.73px;width:39.50px"><span>37.79352</span></div>
<div class="c m" style="left:316px;top:164.73px;width:40.00px"><span>24</span></div>
<div class="c m" style="left:356px;top:164.73px;width:39.50px"><span>2</span></div>
<div class="c m" style="left:395.5px;top:164.73px;width:39.80px"><span>60</span></div>
<div class="c r" style="left:435.3px;top:164.73px;width:20.50px">1</div>
<div class="c" style="left:455.8px;top:164.73px;width:58.00px">Right Cerebrum</div>
<div class="c" style="left:513.8px;top:164.73px;width:57.80px">Frontal Lobe</div>
<div class="c" style="left:571.6px;top:164.73px;width:57.80px">Mid Frontal Gyrus</div>
<div class="c" style="left:629.4px;top:164.73px;width:57.90px">BA 6</div>
<div class="a rh" style="top:173.16px"><span>3</span></div>
<div class="c" style="left:121px;top:173.16px;width:58.00px">mni_icbm152_t...</div>
<div class="c d" style="left:179px;top:173.16px;width:58.00px">Cluster 1 of 8</div>
<div class="c" style="left:237px;top:173.16px;width:39.50px">Centroid</div>
<div class="c m" style="left:276.5px;top:173.16px;width:39.50px"><span>83.22248</span></div>
<div class="c m" style="left:316px;top:173.16px;width:40.00px"><span>30</span></div>
<div class="c m" style="left:356px;top:173.16px;width:39.50px"><span>2</span></div>
<div class="c m" style="left:395.5px;top:173.16px;width:39.80px"><span>53</span></div>
<div class="c r" style="left:435.3px;top:173.16px;width:20.50px">1</div>
<div class="c" style="left:455.8px;top:173.16px;width:58.00px">Right Cerebrum</div>
<div class="c" style="left:513.8px;top:173.16px;width:57.80px">Frontal Lobe</div>
<div class="c" style="left:571.6px;top:173.16px;width:57.80px">Mid Frontal Gyrus</div>
<div class="c" style="left:629.4px;top:173.16px;width:57.90px">BA 6</div>
<div class="a rh" style="top:181.59px"><span>4</span></div>
<div class="c" style="left:121px;top:181.59px;width:58.00px">mni_icbm152_t...</div>
<div class="c d" style="left:179px;top:181.59px;width:58.00px">Cluster 2 of 8</div>
<div class="c" style="left:237px;top:181.59px;width:39.50px">Max</div>
<div class="c m" style="left:276.5px;top:181.59px;width:39.50px"><span>85.73786</span></div>
<div class="c m" style="left:316px;top:181.59px;width:40.00px"><span>−30</span></div>
<div class="c m" style="left:356px;top:181.59px;width:39.50px"><span>0</span></div>
<div class="c m" style="left:395.5px;top:181.59px;width:39.80px"><span>47</span></div>
<div class="c r" style="left:435.3px;top:181.59px;width:20.50px">1</div>
<div class="c" style="left:455.8px;top:181.59px;width:58.00px">Left Cerebrum</div>
<div class="c" style="left:513.8px;top:181.59px;width:57.80px">Frontal Lobe</div>
<div class="c" style="left:571.6px;top:181.59px;width:57.80px">Mid Frontal Gyrus</div>
<div class="c" style="left:629.4px;top:181.59px;width:57.90px">BA 6</div>
<div class="a rh" style="top:190.02px"><span>5</span></div>
<div class="c" style="left:121px;top:190.02px;width:58.00px">mni_icbm152_t...</div>
<div class="c d" style="left:179px;top:190.02px;width:58.00px">Cluster 2 of 8</div>
<div class="c" style="left:237px;top:190.02px;width:39.50px">Min</div>
<div class="c m" style="left:276.5px;top:190.02px;width:39.50px"><span>41.31685</span></div>
<div class="c m" style="left:316px;top:190.02px;width:40.00px"><span>−28</span></div>
<div class="c m" style="left:356px;top:190.02px;width:39.50px"><span>−2</span></div>
<div class="c m" style="left:395.5px;top:190.02px;width:39.80px"><span>61</span></div>
<div class="c r" style="left:435.3px;top:190.02px;width:20.50px">1</div>
<div class="c" style="left:455.8px;top:190.02px;width:58.00px">Left Cerebrum</div>
<div class="c" style="left:513.8px;top:190.02px;width:57.80px">Frontal Lobe</div>
<div class="c" style="left:571.6px;top:190.02px;width:57.80px">Mid Frontal Gyrus</div>
<div class="c" style="left:629.4px;top:190.02px;width:57.90px">BA 6</div>
<div class="a rh" style="top:198.45px"><span>6</span></div>
<div class="c" style="left:121px;top:198.45px;width:58.00px">mni_icbm152_t...</div>
<div class="c d" style="left:179px;top:198.45px;width:58.00px">Cluster 2 of 8</div>
<div class="c" style="left:237px;top:198.45px;width:39.50px">Centroid</div>
<div class="c m" style="left:276.5px;top:198.45px;width:39.50px"><span>58.1298</span></div>
<div class="c m" style="left:316px;top:198.45px;width:40.00px"><span>−27</span></div>
<div class="c m" style="left:356px;top:198.45px;width:39.50px"><span>−2</span></div>
<div class="c m" style="left:395.5px;top:198.45px;width:39.80px"><span>53</span></div>
<div class="c r" style="left:435.3px;top:198.45px;width:20.50px">1</div>
<div class="c" style="left:455.8px;top:198.45px;width:58.00px">Left Cerebrum</div>
<div class="c" style="left:513.8px;top:198.45px;width:57.80px">Frontal Lobe</div>
<div class="c" style="left:571.6px;top:198.45px;width:57.80px">Mid Frontal Gyrus</div>
<div class="c" style="left:629.4px;top:198.45px;width:57.90px">BA 6</div>
<div class="a rh" style="top:206.88px"><span>7</span></div>
<div class="c" style="left:121px;top:206.88px;width:58.00px">mni_icbm152_t...</div>
<div class="c d" style="left:179px;top:206.88px;width:58.00px">Cluster 3 of 8</div>
<div class="c" style="left:237px;top:206.88px;width:39.50px">Max</div>
<div class="c m" style="left:276.5px;top:206.88px;width:39.50px"><span>86.69362</span></div>
<div class="c m" style="left:316px;top:206.88px;width:40.00px"><span>−27</span></div>
<div class="c m" style="left:356px;top:206.88px;width:39.50px"><span>−62</span></div>
<div class="c m" style="left:395.5px;top:206.88px;width:39.80px"><span>49</span></div>
<div class="c r" style="left:435.3px;top:206.88px;width:20.50px">1</div>
<div class="c" style="left:455.8px;top:206.88px;width:58.00px">Left Cerebrum</div>
<div class="c" style="left:513.8px;top:206.88px;width:57.80px">Parietal Lobe</div>
<div class="c" style="left:571.6px;top:206.88px;width:57.80px">Sup Parietal Lob</div>
<div class="c" style="left:629.4px;top:206.88px;width:57.90px">BA 7</div>
<div class="a rh" style="top:215.31px"><span>8</span></div>
<div class="c" style="left:121px;top:215.31px;width:58.00px">mni_icbm152_t...</div>
<div class="c d" style="left:179px;top:215.31px;width:58.00px">Cluster 3 of 8</div>
<div class="c" style="left:237px;top:215.31px;width:39.50px">Min</div>
<div class="c m" style="left:276.5px;top:215.31px;width:39.50px"><span>41.60014</span></div>
<div class="c m" style="left:316px;top:215.31px;width:40.00px"><span>−35</span></div>
<div class="c m" style="left:356px;top:215.31px;width:39.50px"><span>−54</span></div>
<div class="c m" style="left:395.5px;top:215.31px;width:39.80px"><span>52</span></div>
<div class="c r" style="left:435.3px;top:215.31px;width:20.50px">1</div>
<div class="c" style="left:455.8px;top:215.31px;width:58.00px">Left Cerebrum</div>
<div class="c" style="left:513.8px;top:215.31px;width:57.80px">Parietal Lobe</div>
<div class="c" style="left:571.6px;top:215.31px;width:57.80px">Inf Parietal Lob</div>
<div class="c" style="left:629.4px;top:215.31px;width:57.90px">BA 7</div>
<div class="a rh" style="top:223.74px"><span>9</span></div>
<div class="c" style="left:121px;top:223.74px;width:58.00px">mni_icbm152_t...</div>
<div class="c d" style="left:179px;top:223.74px;width:58.00px">Cluster 3 of 8</div>
<div class="c" style="left:237px;top:223.74px;width:39.50px">Centroid</div>
<div class="c m" style="left:276.5px;top:223.74px;width:39.50px"><span>61.2237</span></div>
<div class="c m" style="left:316px;top:223.74px;width:40.00px"><span>−30</span></div>
<div class="c m" style="left:356px;top:223.74px;width:39.50px"><span>−55</span></div>
<div class="c m" style="left:395.5px;top:223.74px;width:39.80px"><span>47</span></div>
<div class="c r" style="left:435.3px;top:223.74px;width:20.50px">1</div>
<div class="c" style="left:455.8px;top:223.74px;width:58.00px">Left Cerebrum</div>
<div class="c" style="left:513.8px;top:223.74px;width:57.80px">Parietal Lobe</div>
<div class="c" style="left:571.6px;top:223.74px;width:57.80px">Inf Parietal Lob</div>
<div class="c" style="left:629.4px;top:223.74px;width:57.90px">BA 7</div>
<div class="a rh" style="top:232.17px"><span>10</span></div>
<div class="c" style="left:121px;top:232.17px;width:58.00px">mni_icbm152_t...</div>
<div class="c d" style="left:179px;top:232.17px;width:58.00px">Cluster 4 of 8</div>
<div class="c" style="left:237px;top:232.17px;width:39.50px">Max</div>
<div class="c m" style="left:276.5px;top:232.17px;width:39.50px"><span>88.15334</span></div>
<div class="c m" style="left:316px;top:232.17px;width:40.00px"><span>16</span></div>
<div class="c m" style="left:356px;top:232.17px;width:39.50px"><span>−61</span></div>
<div class="c m" style="left:395.5px;top:232.17px;width:39.80px"><span>55</span></div>
<div class="c r" style="left:435.3px;top:232.17px;width:20.50px">1</div>
<div class="c" style="left:455.8px;top:232.17px;width:58.00px">Right Cerebrum</div>
<div class="c" style="left:513.8px;top:232.17px;width:57.80px">Parietal Lobe</div>
<div class="c" style="left:571.6px;top:232.17px;width:57.80px">Precuneus</div>
<div class="c" style="left:629.4px;top:232.17px;width:57.90px">BA 7</div>
<div class="a rh" style="top:240.60px"><span>11</span></div>
<div class="c" style="left:121px;top:240.60px;width:58.00px">mni_icbm152_t...</div>
<div class="c d" style="left:179px;top:240.60px;width:58.00px">Cluster 4 of 8</div>
<div class="c" style="left:237px;top:240.60px;width:39.50px">Min</div>
<div class="c m" style="left:276.5px;top:240.60px;width:39.50px"><span>42.04596</span></div>
<div class="c m" style="left:316px;top:240.60px;width:40.00px"><span>19</span></div>
<div class="c m" style="left:356px;top:240.60px;width:39.50px"><span>−70</span></div>
<div class="c m" style="left:395.5px;top:240.60px;width:39.80px"><span>52</span></div>
<div class="c r" style="left:435.3px;top:240.60px;width:20.50px">1</div>
<div class="c" style="left:455.8px;top:240.60px;width:58.00px">Right Cerebrum</div>
<div class="c" style="left:513.8px;top:240.60px;width:57.80px">Parietal Lobe</div>
<div class="c" style="left:571.6px;top:240.60px;width:57.80px">Precuneus</div>
<div class="c" style="left:629.4px;top:240.60px;width:57.90px">BA 7</div>
<div class="a rh" style="top:249.03px"><span>12</span></div>
<div class="c" style="left:121px;top:249.03px;width:58.00px">mni_icbm152_t...</div>
<div class="c d" style="left:179px;top:249.03px;width:58.00px">Cluster 4 of 8</div>
<div class="c" style="left:237px;top:249.03px;width:39.50px">Centroid</div>
<div class="c m" style="left:276.5px;top:249.03px;width:39.50px"><span>85.58428</span></div>
<div class="c m" style="left:316px;top:249.03px;width:40.00px"><span>23</span></div>
<div class="c m" style="left:356px;top:249.03px;width:39.50px"><span>−61</span></div>
<div class="c m" style="left:395.5px;top:249.03px;width:39.80px"><span>49</span></div>
<div class="c r" style="left:435.3px;top:249.03px;width:20.50px">1</div>
<div class="c" style="left:455.8px;top:249.03px;width:58.00px">Right Cerebrum</div>
<div class="c" style="left:513.8px;top:249.03px;width:57.80px">Parietal Lobe</div>
<div class="c" style="left:571.6px;top:249.03px;width:57.80px">Precuneus</div>
<div class="c" style="left:629.4px;top:249.03px;width:57.90px">BA 7</div>
<div class="a rh" style="top:257.46px"><span>13</span></div>
<div class="c" style="left:121px;top:257.46px;width:58.00px">mni_icbm152_t...</div>
<div class="c d" style="left:179px;top:257.46px;width:58.00px">Cluster 5 of 8</div>
<div class="c" style="left:237px;top:257.46px;width:39.50px">Max</div>
<div class="c m" style="left:276.5px;top:257.46px;width:39.50px"><span>84.07684</span></div>
<div class="c m" style="left:316px;top:257.46px;width:40.00px"><span>40</span></div>
<div class="c m" style="left:356px;top:257.46px;width:39.50px"><span>−53</span></div>
<div class="c m" style="left:395.5px;top:257.46px;width:39.80px"><span>44</span></div>
<div class="c r" style="left:435.3px;top:257.46px;width:20.50px">1</div>
<div class="c" style="left:455.8px;top:257.46px;width:58.00px">Right Cerebrum</div>
<div class="c" style="left:513.8px;top:257.46px;width:57.80px">Parietal Lobe</div>
<div class="c" style="left:571.6px;top:257.46px;width:57.80px">Inf Parietal Lob</div>
<div class="c" style="left:629.4px;top:257.46px;width:57.90px">BA 40</div>
<div class="a rh" style="top:265.89px"><span>14</span></div>
<div class="c" style="left:121px;top:265.89px;width:58.00px">mni_icbm152_t...</div>
<div class="c d" style="left:179px;top:265.89px;width:58.00px">Cluster 5 of 8</div>
<div class="c" style="left:237px;top:265.89px;width:39.50px">Min</div>
<div class="c m" style="left:276.5px;top:265.89px;width:39.50px"><span>41.0082</span></div>
<div class="c m" style="left:316px;top:265.89px;width:40.00px"><span>43</span></div>
<div class="c m" style="left:356px;top:265.89px;width:39.50px"><span>−48</span></div>
<div class="c m" style="left:395.5px;top:265.89px;width:39.80px"><span>52</span></div>
<div class="c r" style="left:435.3px;top:265.89px;width:20.50px">1</div>
<div class="c" style="left:455.8px;top:265.89px;width:58.00px">Right Cerebrum</div>
<div class="c" style="left:513.8px;top:265.89px;width:57.80px">Parietal Lobe</div>
<div class="c" style="left:571.6px;top:265.89px;width:57.80px">Inf Parietal Lob</div>
<div class="c" style="left:629.4px;top:265.89px;width:57.90px">BA 40</div>
<div class="a rh" style="top:274.32px"><span>15</span></div>
<div class="c" style="left:121px;top:274.32px;width:58.00px">mni_icbm152_t...</div>
<div class="c d" style="left:179px;top:274.32px;width:58.00px">Cluster 5 of 8</div>
<div class="c" style="left:237px;top:274.32px;width:39.50px">Centroid</div>
<div class="c m" style="left:276.5px;top:274.32px;width:39.50px"><span>63.72268</span></div>
<div class="c m" style="left:316px;top:274.32px;width:40.00px"><span>42</span></div>
<div class="c m" style="left:356px;top:274.32px;width:39.50px"><span>−45</span></div>
<div class="c m" style="left:395.5px;top:274.32px;width:39.80px"><span>48</span></div>
<div class="c r" style="left:435.3px;top:274.32px;width:20.50px">1</div>
<div class="c" style="left:455.8px;top:274.32px;width:58.00px">Right Cerebrum</div>
<div class="c" style="left:513.8px;top:274.32px;width:57.80px">Parietal Lobe</div>
<div class="c" style="left:571.6px;top:274.32px;width:57.80px">Inf Parietal Lob</div>
<div class="c" style="left:629.4px;top:274.32px;width:57.90px">BA 40</div>
<div class="a rh" style="top:282.75px"><span>16</span></div>
<div class="c" style="left:121px;top:282.75px;width:58.00px">mni_icbm152_t...</div>
<div class="c d" style="left:179px;top:282.75px;width:58.00px">Cluster 6 of 8</div>
<div class="c" style="left:237px;top:282.75px;width:39.50px">Max</div>
<div class="c m" style="left:276.5px;top:282.75px;width:39.50px"><span>83.99782</span></div>
<div class="c m" style="left:316px;top:282.75px;width:40.00px"><span>11</span></div>
<div class="c m" style="left:356px;top:282.75px;width:39.50px"><span>16</span></div>
<div class="c m" style="left:395.5px;top:282.75px;width:39.80px"><span>44</span></div>
<div class="c r" style="left:435.3px;top:282.75px;width:20.50px">1</div>
<div class="c" style="left:455.8px;top:282.75px;width:58.00px">Right Cerebrum</div>
<div class="c" style="left:513.8px;top:282.75px;width:57.80px">Frontal Lobe</div>
<div class="c" style="left:571.6px;top:282.75px;width:57.80px">Med Frontal Gyrus</div>
<div class="c" style="left:629.4px;top:282.75px;width:57.90px">BA 32</div>
<div class="a rh" style="top:291.18px"><span>17</span></div>
<div class="c" style="left:121px;top:291.18px;width:58.00px">mni_icbm152_t...</div>
<div class="c d" style="left:179px;top:291.18px;width:58.00px">Cluster 6 of 8</div>
<div class="c" style="left:237px;top:291.18px;width:39.50px">Min</div>
<div class="c m" style="left:276.5px;top:291.18px;width:39.50px"><span>48.696</span></div>
<div class="c m" style="left:316px;top:291.18px;width:40.00px"><span>7</span></div>
<div class="c m" style="left:356px;top:291.18px;width:39.50px"><span>18</span></div>
<div class="c m" style="left:395.5px;top:291.18px;width:39.80px"><span>38</span></div>
<div class="c r" style="left:435.3px;top:291.18px;width:20.50px">1</div>
<div class="c" style="left:455.8px;top:291.18px;width:58.00px">Right Cerebrum</div>
<div class="c" style="left:513.8px;top:291.18px;width:57.80px">Limbic Lobe</div>
<div class="c" style="left:571.6px;top:291.18px;width:57.80px">Cingulate Gyrus</div>
<div class="c" style="left:629.4px;top:291.18px;width:57.90px">BA 32</div>
<div class="a rh" style="top:299.61px"><span>18</span></div>
<div class="c" style="left:121px;top:299.61px;width:58.00px">mni_icbm152_t...</div>
<div class="c d" style="left:179px;top:299.61px;width:58.00px">Cluster 6 of 8</div>
<div class="c" style="left:237px;top:299.61px;width:39.50px">Centroid</div>
<div class="c m" style="left:276.5px;top:299.61px;width:39.50px"><span>71.96961</span></div>
<div class="c m" style="left:316px;top:299.61px;width:40.00px"><span>7</span></div>
<div class="c m" style="left:356px;top:299.61px;width:39.50px"><span>19</span></div>
<div class="c m" style="left:395.5px;top:299.61px;width:39.80px"><span>44</span></div>
<div class="c r" style="left:435.3px;top:299.61px;width:20.50px">1</div>
<div class="c" style="left:455.8px;top:299.61px;width:58.00px">Right Cerebrum</div>
<div class="c" style="left:513.8px;top:299.61px;width:57.80px">Frontal Lobe</div>
<div class="c" style="left:571.6px;top:299.61px;width:57.80px">Med Frontal Gyrus</div>
<div class="c" style="left:629.4px;top:299.61px;width:57.90px">BA 6</div>
<div class="a rh" style="top:308.04px"><span>19</span></div>
<div class="c" style="left:121px;top:308.04px;width:58.00px">mni_icbm152_t...</div>
<div class="c d" style="left:179px;top:308.04px;width:58.00px">Cluster 7 of 8</div>
<div class="c" style="left:237px;top:308.04px;width:39.50px">Max</div>
<div class="c m" style="left:276.5px;top:308.04px;width:39.50px"><span>84.97296</span></div>
<div class="c m" style="left:316px;top:308.04px;width:40.00px"><span>−12</span></div>
<div class="c m" style="left:356px;top:308.04px;width:39.50px"><span>−68</span></div>
<div class="c m" style="left:395.5px;top:308.04px;width:39.80px"><span>46</span></div>
<div class="c r" style="left:435.3px;top:308.04px;width:20.50px">1</div>
<div class="c" style="left:455.8px;top:308.04px;width:58.00px">Left Cerebrum</div>
<div class="c" style="left:513.8px;top:308.04px;width:57.80px">Parietal Lobe</div>
<div class="c" style="left:571.6px;top:308.04px;width:57.80px">Precuneus</div>
<div class="c" style="left:629.4px;top:308.04px;width:57.90px">BA 7</div>
<div class="a rh" style="top:316.47px"><span>20</span></div>
<div class="c" style="left:121px;top:316.47px;width:58.00px">mni_icbm152_t...</div>
<div class="c d" style="left:179px;top:316.47px;width:58.00px">Cluster 7 of 8</div>
<div class="c" style="left:237px;top:316.47px;width:39.50px">Min</div>
<div class="c m" style="left:276.5px;top:316.47px;width:39.50px"><span>40.67868</span></div>
<div class="c m" style="left:316px;top:316.47px;width:40.00px"><span>−21</span></div>
<div class="c m" style="left:356px;top:316.47px;width:39.50px"><span>−70</span></div>
<div class="c m" style="left:395.5px;top:316.47px;width:39.80px"><span>50</span></div>
<div class="c r" style="left:435.3px;top:316.47px;width:20.50px">1</div>
<div class="c" style="left:455.8px;top:316.47px;width:58.00px">Left Cerebrum</div>
<div class="c" style="left:513.8px;top:316.47px;width:57.80px">Parietal Lobe</div>
<div class="c" style="left:571.6px;top:316.47px;width:57.80px">Precuneus</div>
<div class="c" style="left:629.4px;top:316.47px;width:57.90px">BA 7</div>
<div class="a rh" style="top:324.90px"><span>21</span></div>
<div class="c" style="left:121px;top:324.90px;width:58.00px">mni_icbm152_t...</div>
<div class="c d" style="left:179px;top:324.90px;width:58.00px">Cluster 7 of 8</div>
<div class="c" style="left:237px;top:324.90px;width:39.50px">Centroid</div>
<div class="c m" style="left:276.5px;top:324.90px;width:39.50px"><span>79.43524</span></div>
<div class="c m" style="left:316px;top:324.90px;width:40.00px"><span>−17</span></div>
<div class="c m" style="left:356px;top:324.90px;width:39.50px"><span>−68</span></div>
<div class="c m" style="left:395.5px;top:324.90px;width:39.80px"><span>53</span></div>
<div class="c r" style="left:435.3px;top:324.90px;width:20.50px">1</div>
<div class="c" style="left:455.8px;top:324.90px;width:58.00px">Left Cerebrum</div>
<div class="c" style="left:513.8px;top:324.90px;width:57.80px">Parietal Lobe</div>
<div class="c" style="left:571.6px;top:324.90px;width:57.80px">Precuneus</div>
<div class="c" style="left:629.4px;top:324.90px;width:57.90px">BA 7</div>
<div class="a rh" style="top:333.33px"><span>22</span></div>
<div class="c" style="left:121px;top:333.33px;width:58.00px">mni_icbm152_t...</div>
<div class="c d" style="left:179px;top:333.33px;width:58.00px">Cluster 8 of 8</div>
<div class="c" style="left:237px;top:333.33px;width:39.50px">Max</div>
<div class="c m" style="left:276.5px;top:333.33px;width:39.50px"><span>83.10021</span></div>
<div class="c m" style="left:316px;top:333.33px;width:40.00px"><span>42</span></div>
<div class="c m" style="left:356px;top:333.33px;width:39.50px"><span>3</span></div>
<div class="c m" style="left:395.5px;top:333.33px;width:39.80px"><span>25</span></div>
<div class="c r" style="left:435.3px;top:333.33px;width:20.50px">1</div>
<div class="c" style="left:455.8px;top:333.33px;width:58.00px">Right Cerebrum</div>
<div class="c" style="left:513.8px;top:333.33px;width:57.80px">Frontal Lobe</div>
<div class="c" style="left:571.6px;top:333.33px;width:57.80px">Precentral Gyrus</div>
<div class="c" style="left:629.4px;top:333.33px;width:57.90px">BA 6</div>
<div class="a rh" style="top:341.76px"><span>23</span></div>
<div class="c" style="left:121px;top:341.76px;width:58.00px">mni_icbm152_t...</div>
<div class="c d" style="left:179px;top:341.76px;width:58.00px">Cluster 8 of 8</div>
<div class="c" style="left:237px;top:341.76px;width:39.50px">Min</div>
<div class="c m" style="left:276.5px;top:341.76px;width:39.50px"><span>50.31079</span></div>
<div class="c m" style="left:316px;top:341.76px;width:40.00px"><span>47</span></div>
<div class="c m" style="left:356px;top:341.76px;width:39.50px"><span>11</span></div>
<div class="c m" style="left:395.5px;top:341.76px;width:39.80px"><span>25</span></div>
<div class="c r" style="left:435.3px;top:341.76px;width:20.50px">1</div>
<div class="c" style="left:455.8px;top:341.76px;width:58.00px">Right Cerebrum</div>
<div class="c" style="left:513.8px;top:341.76px;width:57.80px">Frontal Lobe</div>
<div class="c" style="left:571.6px;top:341.76px;width:57.80px">Inf Frontal Gyrus</div>
<div class="c" style="left:629.4px;top:341.76px;width:57.90px">BA 9</div>
<div class="a rh" style="top:350.19px"><span>24</span></div>
<div class="c" style="left:121px;top:350.19px;width:58.00px">mni_icbm152_t...</div>
<div class="c d" style="left:179px;top:350.19px;width:58.00px">Cluster 8 of 8</div>
<div class="c" style="left:237px;top:350.19px;width:39.50px">Centroid</div>
<div class="c m" style="left:276.5px;top:350.19px;width:39.50px"><span>63.83153</span></div>
<div class="c m" style="left:316px;top:350.19px;width:40.00px"><span>44</span></div>
<div class="c m" style="left:356px;top:350.19px;width:39.50px"><span>9</span></div>
<div class="c m" style="left:395.5px;top:350.19px;width:39.80px"><span>26</span></div>
<div class="c r" style="left:435.3px;top:350.19px;width:20.50px">1</div>
<div class="c" style="left:455.8px;top:350.19px;width:58.00px">Right Cerebrum</div>
<div class="c" style="left:513.8px;top:350.19px;width:57.80px">Frontal Lobe</div>
<div class="c" style="left:571.6px;top:350.19px;width:57.80px">Inf Frontal Gyrus</div>
<div class="c" style="left:629.4px;top:350.19px;width:57.90px">BA 9</div></div>

</div>
</body></html>
